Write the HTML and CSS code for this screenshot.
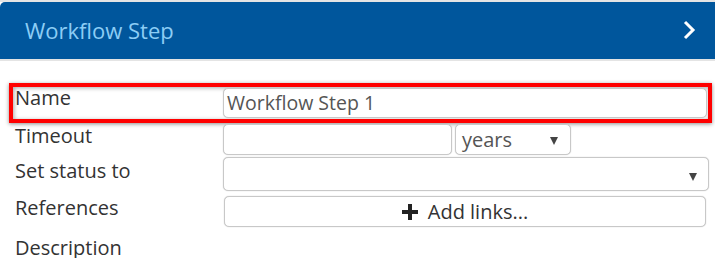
FILE: index.html
```html
<!DOCTYPE html>
<html lang="en">
<head>
    <meta charset="UTF-8">
    <title>Workflow Step</title>
    <link rel="stylesheet" href="styles.css">
</head>
<body>
<div class="panel">
    <div class="panel-header">
        <h2>Workflow Step</h2>
        <svg class="chevron" width="14" height="20" viewBox="0 0 14 20">
            <polyline points="3,2 11,10 3,18" fill="none" stroke="#fff" stroke-width="3"/>
        </svg>
    </div>

    <div class="panel-body">
        <div class="row row-name">
            <label>Name</label>
            <div class="field field-name">Workflow Step 1</div>
        </div>
        <div class="row row-timeout">
            <label>Timeout</label>
            <div class="timeout-group">
                <div class="field field-timeout"></div>
                <div class="field select field-unit">years<span class="arrow"></span></div>
            </div>
        </div>
        <div class="row row-status">
            <label>Set status to</label>
            <div class="field select field-status"><span class="arrow"></span></div>
        </div>
        <div class="row row-refs">
            <label>References</label>
            <button class="btn-links">
                <svg width="16" height="16" viewBox="0 0 16 16">
                    <rect x="6" y="0" width="4" height="16" fill="#222"/>
                    <rect x="0" y="6" width="16" height="4" fill="#222"/>
                </svg>
                Add links...
            </button>
        </div>
        <div class="row row-desc">
            <label>Description</label>
        </div>
    </div>
</div>
</body>
</html>
```

FILE: styles.css
```css
body {
    margin: 0;
    font-family: "Open Sans", sans-serif;
    background: #fff;
    color: #333;
}

.panel {
    border-top: 2px solid #e4e4e4;
}

.panel-header {
    height: 57px;
    background-color: #00569c;
    border-radius: 5px 0 0 0;
    border-bottom: 2px solid #e4e4e4;
    display: flex;
    align-items: center;
    justify-content: space-between;
    padding: 0 19px 0 25px;
}

.panel-header h2 {
    margin: 0;
    font-size: 22px;
    font-weight: normal;
    color: #8ccdf5;
    margin-top: -1px;
}

.chevron {
    margin-top: -1px;
}

.panel-body {
    padding: 22px 3px 0 9px;
}

.row {
    display: grid;
    grid-template-columns: 210px 1fr;
    align-items: start;
    margin: 0 4px;
}

.row label {
    font-size: 20px;
    line-height: 20px;
    padding-left: 2px;
}

.row-name {
    margin: 0;
    height: 32px;
    border: 4px solid #f00;
    box-shadow: 0 1px 4px rgba(0, 0, 0, 0.45), inset 1px 1px 4px rgba(0, 0, 0, 0.35);
}

.row-name label {
    padding-top: 1px;
}

.field {
    box-sizing: border-box;
    border: 1px solid #c8c8c8;
    border-radius: 5px;
    box-shadow: 0 0 1px #bbb;
    background: #fff;
    font-size: 19.5px;
    color: #555;
    position: relative;
}

.field-name {
    margin: 1px 1px 0 0;
    height: 30px;
    line-height: 28px;
    padding-left: 3px;
}

.row-timeout {
    margin-top: 1px;
}

.row-timeout label {
    padding-top: 2px;
}

.timeout-group {
    display: flex;
    gap: 3px;
}

.field-timeout {
    width: 229px;
    height: 31px;
}

.field-unit {
    width: 116px;
    height: 31px;
    line-height: 29px;
    padding-left: 6px;
    font-size: 20px;
}

.arrow {
    position: absolute;
    right: 12px;
    top: 12px;
    border-left: 4px solid transparent;
    border-right: 4px solid transparent;
    border-top: 8px solid #444;
}

.row-status {
    margin-top: 2px;
}

.row-status label {
    padding-top: 4px;
}

.field-status {
    height: 34px;
    margin-right: -1px;
}

.field-status .arrow {
    top: 15px;
    right: 11px;
}

.row-refs {
    margin-top: 5px;
}

.row-refs label {
    padding-top: 2px;
}

.btn-links {
    margin: 0 2px 0 1px;
    height: 31px;
    border: 1px solid #c8c8c8;
    border-radius: 5px;
    box-shadow: 0 0 1px #bbb;
    background: #fff;
    font-family: "Open Sans", sans-serif;
    font-size: 20px;
    color: #333;
    display: flex;
    align-items: center;
    justify-content: center;
    gap: 10px;
    padding: 0;
}

.row-desc {
    margin-top: 11px;
}
```
